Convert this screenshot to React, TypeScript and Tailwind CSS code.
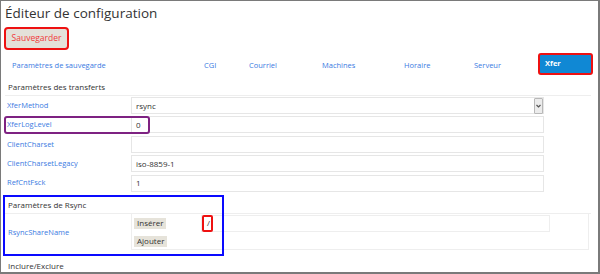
import { ReactNode } from 'react';

const tabs = [
  { label: 'Paramètres de sauvegarde', w: 'w-[192px]' },
  { label: 'CGI', w: 'w-[45px]' },
  { label: 'Courriel', w: 'w-[73px]' },
  { label: 'Machines', w: 'w-[82px]' },
  { label: 'Horaire', w: 'w-[70px]' },
  { label: 'Serveur', w: 'w-[64px]' },
];

const rows = [
  { name: 'XferMethod', value: 'rsync', select: true },
  { name: 'XferLogLevel', value: '0', marked: true },
  { name: 'ClientCharset', value: '' },
  { name: 'ClientCharsetLegacy', value: 'iso-8859-1' },
  { name: 'RefCntFsck', value: '1' },
];

function SectionHeader({ children }: { children: ReactNode }) {
  return (
    <div className="h-[21px] flex items-end pb-[3px] pl-[3px] border-b border-[#eeeeee] text-[8px] leading-[11px] text-[#333]">
      {children}
    </div>
  );
}

export default function App() {
  return (
    <div className="w-[600px] h-[274px] overflow-hidden bg-white border-l border-t border-r-2 border-b-2 border-[#7a7a7a] font-['Open_Sans',sans-serif] text-[#333]">
      {/* Title */}
      <div className="h-[22px] pt-[3px] pl-[4px] text-[13.5px] leading-[18px] text-[#333]">
        Éditeur de configuration
      </div>

      {/* Save */}
      <div className="mt-[4px] ml-[3px] w-[65px] h-[23px] rounded-[4px] border-2 border-[#ee1111] bg-[#e4e1d9] flex items-center justify-center text-[8.5px] text-[#f03a3a]">
        Sauvegarder
      </div>

      {/* Tabs */}
      <div className="mt-[3px] h-[22px] flex items-center">
        <div className="w-[11px]" />
        {tabs.map((t) => (
          <div key={t.label} className={`${t.w} text-[7.5px] leading-[10px] text-[#3b7be2] pt-[1px]`}>
            {t.label}
          </div>
        ))}
        <div className="w-[55px] h-[22px] rounded-[3px] border-2 border-[#ee1111] bg-[#1088d4] flex items-center pl-[5px] text-[7.5px] font-bold text-white">
          Xfer
        </div>
      </div>

      <div className="ml-[4px] w-[586px]">
        <SectionHeader>Paramètres des transferts</SectionHeader>

        {rows.map((r) => (
          <div key={r.name} className="relative h-[19.4px] flex">
            <div className="w-[126px] h-[17px] mt-[1px] flex items-center pl-[2px] text-[7.5px] text-[#3b7be2]">
              {r.name}
            </div>
            <div className="w-[413px] h-[17px] mt-[1px] border border-[#e6e6e6] flex items-center pl-[4px] text-[8px] text-[#333]">
              <span className="flex-1">{r.value}</span>
              {r.select && (
                <div className="w-[9px] h-[16px] border border-[#b8b8b8] rounded-[1px] bg-[#ececec] flex items-center justify-center">
                  <svg width="5" height="4" viewBox="0 0 5 4">
                    <path d="M0.5 1 L2.5 3 L4.5 1" stroke="#555" strokeWidth="1.2" fill="none" />
                  </svg>
                </div>
              )}
            </div>
            {r.marked && (
              <div className="absolute left-[-1px] top-[0.5px] w-[146px] h-[18px] rounded-[3px] border-2 border-[#7e2282]" />
            )}
          </div>
        ))}

        {/* Rsync */}
        <div className="relative">
          <SectionHeader>Paramètres de Rsync</SectionHeader>
          <div className="h-[36px] flex">
            <div className="w-[126px] flex items-center pl-[3px] pt-[2px] text-[7.5px] text-[#3b7be2]">
              RsyncShareName
            </div>
            <div className="w-[458px] h-[36px] border border-t-0 border-[#eeeeee] flex pl-[2px]">
              <div className="w-[67px] flex flex-col items-start">
                <div className="mt-[4px] h-[11px] px-[3px] bg-[#e6e3da] flex items-center text-[8px] text-[#333]">
                  Insérer
                </div>
                <div className="mt-[7px] h-[11px] px-[3px] bg-[#e6e3da] flex items-center text-[8px] text-[#333]">
                  Ajouter
                </div>
              </div>
              <div className="relative mt-[1px] w-[349px] h-[17px] border border-[#eeeeee] flex items-center pl-[5px] text-[8px] text-[#333]">
                /
                <div className="absolute left-[0px] top-[-1px] w-[11px] h-[17px] rounded-[2px] border-2 border-[#ee1111]" />
              </div>
            </div>
          </div>
          <div className="absolute left-[-2px] top-[2px] w-[221px] h-[61px] border-2 border-[#0a0aff]" />
        </div>

        <div className="mt-[10px] pl-[3px] text-[8px] leading-[12px] text-[#333]">Inclure/Exclure</div>
      </div>
    </div>
  );
}
